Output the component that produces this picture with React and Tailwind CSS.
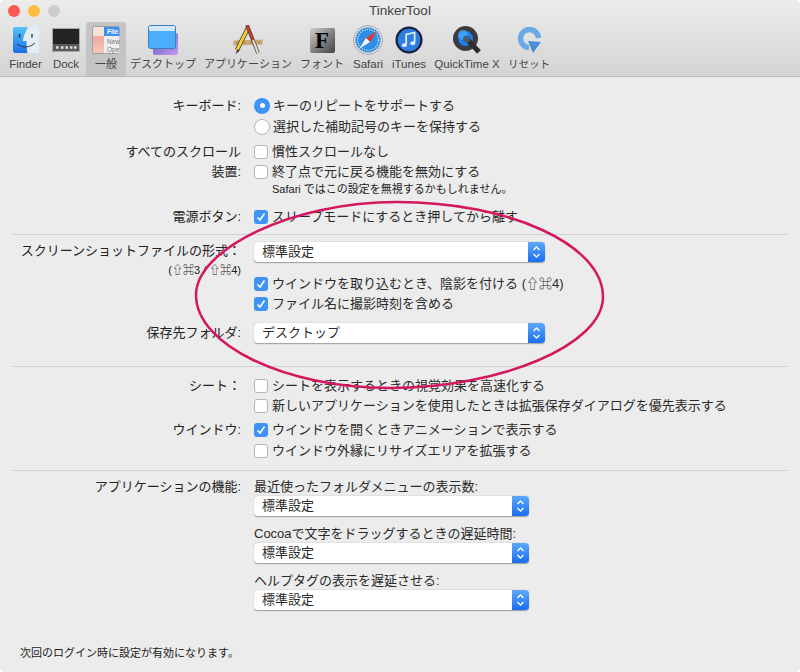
import React from 'react'

const font = { fontFamily: '"Liberation Sans","Noto Sans CJK JP",sans-serif' }

function FinderIcon() {
  return (
    <svg width="26" height="26" viewBox="0 0 26 26">
      <defs>
        <linearGradient id="finderBlue" x1="0" y1="0" x2="0" y2="1">
          <stop offset="0" stopColor="#55c4f8" />
          <stop offset="1" stopColor="#1a6ee6" />
        </linearGradient>
      </defs>
      <rect width="26" height="26" rx="2" fill="#e4edf4" />
      <path d="M2 0h13c-2 5-5 9-5 14h3.500c0 4 0 8 1 12H2a2 2 0 0 1-2-2V2a2 2 0 0 1 2-2z" fill="url(#finderBlue)" />
      <path d="M6.500 7v3.500M19 7v3.500" stroke="#2b2b33" strokeWidth="1.400" />
      <path d="M4 17c5 4 13 4 18-1" fill="none" stroke="#2a2a3a" strokeWidth="0.900" />
    </svg>
  )
}

function DockIcon() {
  return (
    <svg width="28" height="24" viewBox="0 0 28 24">
      <rect x="0.500" y="0.500" width="27" height="23" fill="#232323" stroke="#a8a8a8" />
      <rect x="1" y="16" width="26" height="7" fill="#5a5a5a" />
      <path d="M4 19.500h2.500M9 19.500h2.500M13.500 19.500h2.500M18 19.500h2.500M22 19.500h2.500" stroke="#dedede" strokeWidth="2.500" />
    </svg>
  )
}

function GeneralIcon() {
  return (
    <svg width="28" height="28" viewBox="0 0 28 28">
      <defs>
        <linearGradient id="generalPink" x1="0" y1="0" x2="0" y2="1">
          <stop offset="0" stopColor="#f8e6df" />
          <stop offset="0.350" stopColor="#f6dfd8" />
          <stop offset="0.360" stopColor="#eda9a2" />
          <stop offset="1" stopColor="#f8c8b8" />
        </linearGradient>
      </defs>
      <rect x="0.500" y="0.500" width="27" height="27" rx="2" fill="url(#generalPink)" stroke="#a0a0a0" />
      <rect x="12" y="1" width="15.500" height="26" fill="#eeeeee" />
      <rect x="12" y="1" width="15.500" height="9" fill="#3b8ff0" />
      <text x="15" y="8" fontSize="6.500" fontWeight="700" fill="#fff">File</text>
      <text x="15" y="18" fontSize="6.500" fill="#777">New</text>
      <text x="15" y="26" fontSize="6.500" fill="#777">Ope</text>
    </svg>
  )
}

function DesktopIcon() {
  return (
    <svg width="30" height="30" viewBox="0 0 30 30">
      <defs>
        <linearGradient id="desktopBack" x1="0" y1="0" x2="1" y2="1">
          <stop offset="0" stopColor="#5a58c8" />
          <stop offset="1" stopColor="#c49af0" />
        </linearGradient>
      </defs>
      <rect x="5" y="8" width="25" height="22" rx="2" fill="url(#desktopBack)" />
      <rect x="0.500" y="0.500" width="27" height="23" rx="2" fill="#4aaefc" stroke="#3b7fb8" />
      <rect x="1" y="1" width="26" height="5" rx="1" fill="#cfe9fb" />
    </svg>
  )
}

function AppIcon() {
  return (
    <svg width="30" height="30" viewBox="0 0 30 30">
      <rect x="0.500" y="15" width="29" height="5" fill="#c9a877" transform="rotate(-2 15 17)" />
      <path d="M4 16.500v2M8 16.500v2M12 16.500v2M18 16.500v2M22 16.500v2M26 16.500v2" stroke="#8d7048" strokeWidth="0.700" />
      <path d="M15 3 L4 25" stroke="#333" strokeWidth="4.500" />
      <path d="M15 3 L4 25" stroke="#f6cc3a" strokeWidth="3" />
      <path d="M4.500 24 L2.500 29 L6.500 26z" fill="#333" />
      <path d="M14 0 L25 28" stroke="#333" strokeWidth="3.500" />
      <path d="M14 0 L20 15" stroke="#d4392b" strokeWidth="2.200" />
      <path d="M20 15 L25 28" stroke="#eadcc6" strokeWidth="2.200" />
    </svg>
  )
}

function FontIcon() {
  return (
    <div className="flex h-[25px] w-[25px] items-center justify-center rounded-[2px] bg-gradient-to-br from-[#cfcfcf] to-[#444444] text-[23px] font-bold leading-none text-black" style={{ fontFamily: '"Liberation Serif",serif' }}>F</div>
  )
}

function SafariIcon() {
  return (
    <svg width="30" height="30" viewBox="0 0 30 30">
      <circle cx="15" cy="15" r="14.500" fill="#dcdcdc" stroke="#aaa" />
      <circle cx="15" cy="15" r="12.500" fill="#2f8fe6" />
      <circle cx="15" cy="15" r="10.500" fill="none" stroke="#cfe6fa" strokeWidth="1.400" strokeDasharray="1 1.400" />
      <path d="M24 6 L13 13 L17 17z" fill="#e8352d" />
      <path d="M6 24 L13 13 L17 17z" fill="#f4f4f4" />
    </svg>
  )
}

function ITunesIcon() {
  return (
    <svg width="28" height="28" viewBox="0 0 30 30">
      <circle cx="15" cy="15" r="14.500" fill="#14233e" />
      <circle cx="15" cy="15" r="12" fill="#2f7de0" />
      <path d="M12 20V9l9-2v11" fill="none" stroke="#dff0ff" strokeWidth="1.800" />
      <ellipse cx="10" cy="20.500" rx="2.600" ry="2.100" fill="#dff0ff" />
      <ellipse cx="19" cy="18.500" rx="2.600" ry="2.100" fill="#dff0ff" />
    </svg>
  )
}

function QuickTimeIcon() {
  return (
    <svg width="30" height="28" viewBox="0 0 30 28">
      <circle cx="13.500" cy="12.500" r="10" fill="#1a7ff2" stroke="#3c3c40" strokeWidth="5" />
      <circle cx="11" cy="9" r="5" fill="#4ab0ff" opacity="0.700" />
      <path d="M14 12 L27 26" stroke="#2e2e32" strokeWidth="5" />
      <circle cx="14.500" cy="13" r="3.500" fill="#4a5a70" />
    </svg>
  )
}

function ResetIcon() {
  return (
    <svg width="25" height="26" viewBox="0 0 25 26">
      <path d="M21.500 11 A9 9 0 1 0 12 20.500" fill="none" stroke="#6aa8e6" strokeWidth="5.500" />
      <path d="M11 14 L24 15 L16 26z" fill="#4a8cd6" />
    </svg>
  )
}

const tools = [
  { label: 'Finder', icon: <FinderIcon />, w: 'w-[41px]', text: 'text-[11.500px]' },
  { label: 'Dock', icon: <DockIcon />, w: 'w-[40px]', text: 'text-[11.500px]' },
  { label: '一般', icon: <GeneralIcon />, w: 'w-[40px]', text: 'text-[11px]', active: true },
  { label: 'デスクトップ', icon: <DesktopIcon />, w: 'w-[74px]', text: 'text-[11px]' },
  { label: 'アプリケーション', icon: <AppIcon />, w: 'w-[96px]', text: 'text-[11px]' },
  { label: 'フォント', icon: <FontIcon />, w: 'w-[52px]', text: 'text-[11px]' },
  { label: 'Safari', icon: <SafariIcon />, w: 'w-[40px]', text: 'text-[11.500px]' },
  { label: 'iTunes', icon: <ITunesIcon />, w: 'w-[42px]', text: 'text-[11.500px]' },
  { label: 'QuickTime X', icon: <QuickTimeIcon />, w: 'w-[74px]', text: 'text-[11.500px]' },
  { label: 'リセット', icon: <ResetIcon />, w: 'w-[50px]', text: 'text-[10.500px]' },
]

function Check({ on }) {
  return (
    <span className={`flex h-[14px] w-[14px] shrink-0 items-center justify-center rounded-[3px] ${on ? 'bg-[#3f93f7]' : 'border border-[#b4b4b4] bg-white'}`}>
      {on && (
        <svg width="10" height="10" viewBox="0 0 10 10">
          <path d="M1.500 5.500L4 8l4.500-6.500" fill="none" stroke="#fff" strokeWidth="1.600" />
        </svg>
      )}
    </span>
  )
}

function Radio({ on }) {
  return (
    <span className={`flex h-[16px] w-[16px] shrink-0 items-center justify-center rounded-full ${on ? 'bg-[#3f93f7]' : 'border border-[#b4b4b4] bg-white'}`}>
      {on && <span className="h-[5px] w-[5px] rounded-full bg-white" />}
    </span>
  )
}

function Select({ value, w }) {
  return (
    <div className={`flex h-[21px] items-stretch overflow-hidden rounded-[4px] border-b border-b-[#a8a8a8] bg-white shadow-[0_0_1px_#888] ${w}`}>
      <div className="flex-1 pl-[8px] text-[13px] leading-[20px] text-[#2a2a2a]">{value}</div>
      <div className="flex w-[17px] items-center justify-center bg-gradient-to-b from-[#5ba9fb] to-[#1a6df0]">
        <svg width="9" height="14" viewBox="0 0 9 14">
          <path d="M1.500 5L4.500 2l3 3M1.500 9l3 3 3-3" fill="none" stroke="#fff" strokeWidth="1.300" />
        </svg>
      </div>
    </div>
  )
}

function Row({ label, className = '', labelClass = 'leading-[20px]', children }) {
  return (
    <div className={`flex ${className}`}>
      <div className={`w-[241px] shrink-0 text-right text-[13px] text-[#222] ${labelClass}`}>{label}</div>
      <div className="ml-[13px] min-w-0 flex-1">{children}</div>
    </div>
  )
}

function Option({ on, radio, children, className = 'h-[20px]' }) {
  return (
    <div className={`flex items-center text-[13px] text-[#2a2a2a] ${className}`}>
      {radio ? <Radio on={on} /> : <Check on={on} />}
      <span className={`whitespace-nowrap ${radio ? 'ml-[3px]' : 'ml-[4px]'}`}>{children}</span>
    </div>
  )
}

function Field({ label, className = '' }) {
  return (
    <div className={className}>
      <div className="text-[13px] leading-[19px] text-[#2a2a2a]">{label}</div>
      <Select value="標準設定" w="w-[275px]" />
    </div>
  )
}

export default function App() {
  return (
    <div className="h-[672px] w-[800px] bg-white">
      <div className="relative h-[672px] w-[800px] overflow-hidden rounded-[5px] bg-[#ececec]" style={font}>
        {/* Title bar + toolbar */}
        <div className="h-[77px] border-b border-[#b8b8b8] bg-gradient-to-b from-[#ececec] to-[#d4d4d4]">
          <div className="relative h-[22px] text-center text-[13.500px] leading-[22px] text-[#444]">
            TinkerTool
            <div className="absolute left-[8px] top-[5px] flex gap-[8px]">
              <span className="h-[12px] w-[12px] rounded-full bg-[#fc5753]" />
              <span className="h-[12px] w-[12px] rounded-full bg-[#fdbc40]" />
              <span className="h-[12px] w-[12px] rounded-full bg-[#cdcdcd]" />
            </div>
          </div>
          <div className="flex pl-[5px]">
            {tools.map(t => (
              <div key={t.label} className={`flex h-[54px] shrink-0 flex-col items-center justify-between overflow-hidden rounded-t-[3px] pb-[5px] ${t.w} ${t.active ? 'bg-[#c4c4c4]' : ''}`}>
                <div className="flex h-[33px] items-center pt-[3px]">{t.icon}</div>
                <div className={`whitespace-nowrap leading-[14px] text-[#444] ${t.text}`}>{t.label}</div>
              </div>
            ))}
          </div>
        </div>

        {/* Settings */}
        <div className="pt-[18px]">
          <Row label="キーボード:" labelClass="leading-[21px]">
            <Option radio on className="h-[21px]">キーのリピートをサポートする</Option>
            <Option radio className="h-[21px]">選択した補助記号のキーを保持する</Option>
          </Row>
          <Row label={<>すべてのスクロール<br />装置:</>} className="mt-[5px]">
            <Option>慣性スクロールなし</Option>
            <Option>終了点で元に戻る機能を無効にする</Option>
            <div className="ml-[18px] text-[11px] leading-[14px] text-[#222]">Safari ではこの設定を無視するかもしれません。</div>
          </Row>
          <Row label="電源ボタン:" className="mt-[11px]">
            <Option on>スリープモードにするとき押してから離す</Option>
          </Row>

          <div className="mx-[12px] mt-[7px] border-t border-[#d2d2d2]" />

          <Row
            label={<><div className="leading-[18px]">スクリーンショットファイルの形式：</div><div className="whitespace-nowrap text-[11px] leading-[20px]">(⇧⌘3 / ⇧⌘4)</div></>}
            className="mt-[7px]"
          >
            <Select value="標準設定" w="w-[291px]" />
            <div className="mt-[11px]">
              <Option on>ウインドウを取り込むとき、陰影を付ける (⇧⌘4)</Option>
              <Option on>ファイル名に撮影時刻を含める</Option>
            </div>
          </Row>
          <Row label="保存先フォルダ:" className="mt-[9px]">
            <Select value="デスクトップ" w="w-[291px]" />
          </Row>

          <div className="mx-[12px] mt-[22px] border-t border-[#d2d2d2]" />

          <Row label="シート：" className="mt-[9px]">
            <Option>シートを表示するときの視覚効果を高速化する</Option>
            <Option>新しいアプリケーションを使用したときは拡張保存ダイアログを優先表示する</Option>
          </Row>
          <Row label="ウインドウ:" className="mt-[4px]">
            <Option on>ウインドウを開くときアニメーションで表示する</Option>
            <Option className="h-[21px]">ウインドウ外縁にリサイズエリアを拡張する</Option>
          </Row>

          <div className="mx-[12px] mt-[9px] border-t border-[#d2d2d2]" />

          <Row label="アプリケーションの機能:" className="mt-[6px]">
            <Field label="最近使ったフォルダメニューの表示数:" />
            <Field label="Cocoaで文字をドラッグするときの遅延時間:" className="mt-[7px]" />
            <Field label="ヘルプタグの表示を遅延させる:" className="mt-[7px]" />
          </Row>
        </div>

        <div className="absolute left-[20px] top-[646px] text-[11px] leading-[14px] text-[#222]">次回のログイン時に設定が有効になります。</div>

        {/* Hand drawn ellipse over the form */}
        <svg className="pointer-events-none absolute left-0 top-0" width="800" height="672" viewBox="0 0 800 672">
          <path d="M196 295 C196 250 290 202 397 202 C510 202 603 245 603 297 C603 345 500 388 390 388 C285 388 196 345 196 295 Z" fill="none" stroke="#d5175f" strokeWidth="2.500" />
        </svg>
      </div>
    </div>
  )
}
